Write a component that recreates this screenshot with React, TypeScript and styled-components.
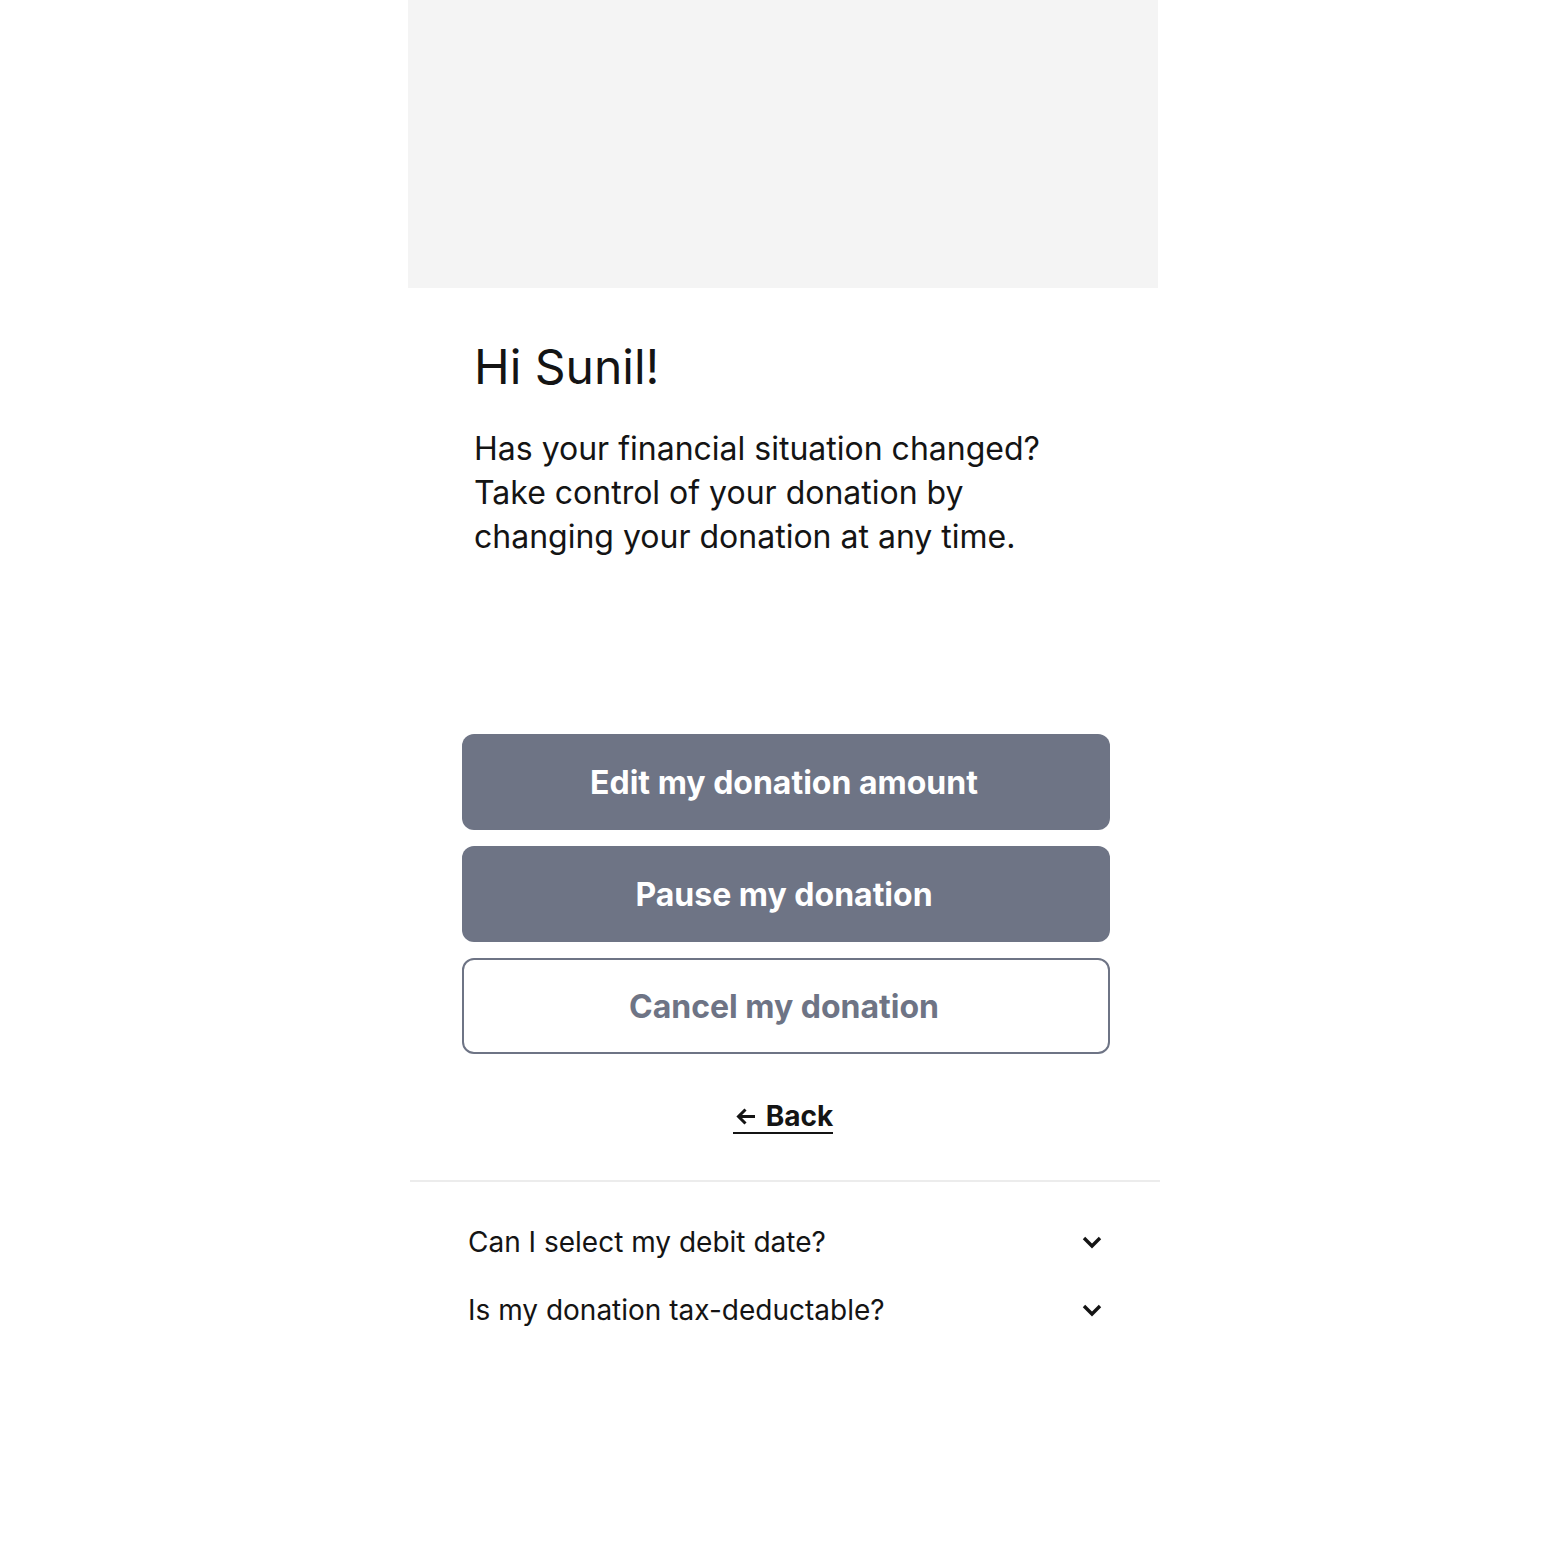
import React from 'react';
import styled, { createGlobalStyle } from 'styled-components';

const GlobalStyle = createGlobalStyle`
  html, body {
    margin: 0;
    padding: 0;
    background: #ffffff;
  }
  body {
    font-family: Inter, "Noto Sans", "Liberation Sans", sans-serif;
    color: #141414;
  }
`;

const Page = styled.div`
  width: 750px;
  margin: 0 auto 0 408px;
  display: flex;
  flex-direction: column;
`;

const Hero = styled.div`
  height: 288px;
  background: #f4f4f4;
`;

const Intro = styled.section`
  padding: 51px 66px 0;
`;

const Heading = styled.h1`
  margin: 0;
  font-size: 48px;
  line-height: 56px;
  font-weight: 400;
  color: #141414;
`;

const Lead = styled.p`
  margin: 32px 0 0;
  font-size: 32px;
  line-height: 44px;
  font-weight: 400;
  color: #141414;
`;

const Actions = styled.div`
  margin-top: 175px;
  padding: 0 48px 0 54px;
  display: flex;
  flex-direction: column;
  gap: 16px;
`;

const ActionButton = styled.button<{ $outline?: boolean }>`
  height: 96px;
  width: 100%;
  padding: 0 4px 0 0;
  border-radius: 12px;
  font-family: Inter, "Noto Sans", "Liberation Sans", sans-serif;
  font-size: 32px;
  font-weight: 700;
  cursor: pointer;
  ${({ $outline }) =>
    $outline
      ? `
    background: #ffffff;
    color: #6e7485;
    border: 2px solid #6e7485;
  `
      : `
    background: #6e7485;
    color: #ffffff;
    border: none;
  `}
`;

const BackRow = styled.div`
  margin-top: 46px;
  display: flex;
  justify-content: center;
`;

const BackLink = styled.a`
  display: inline-flex;
  align-items: center;
  gap: 10px;
  padding-left: 2px;
  font-size: 28px;
  line-height: 32px;
  font-weight: 700;
  color: #141414;
  text-decoration: none;
  border-bottom: 2px solid #141414;
  cursor: pointer;
`;

const Divider = styled.hr`
  margin: 46px 0 0 2px;
  border: none;
  border-top: 2px solid #ececec;
  width: 750px;
`;

const Faq = styled.ul`
  list-style: none;
  margin: 26px 0 0;
  padding: 0 56px 0 60px;
`;

const FaqRow = styled.li`
  height: 68px;
  display: flex;
  align-items: center;
  justify-content: space-between;
  font-size: 28px;
  color: #141414;
  cursor: pointer;
`;

const ArrowLeft = () => (
  <svg width="21" height="19" viewBox="0 0 21 19" fill="none">
    <path d="M20 9.5H3.5M10.5 2.5l-7 7 7 7" stroke="#141414" strokeWidth="3" />
  </svg>
);

const Chevron = () => (
  <svg width="20" height="13" viewBox="0 0 20 13" fill="none">
    <path d="M2 2l8 8 8-8" stroke="#141414" strokeWidth="3.4" />
  </svg>
);

const faqs = ['Can I select my debit date?', 'Is my donation tax-deductable?'];

export default function App() {
  return (
    <>
      <GlobalStyle />
      <Page>
        <Hero />
        <Intro>
          <Heading>Hi Sunil!</Heading>
          <Lead>
            Has your financial situation changed?
            <br />
            Take control of your donation by
            <br />
            changing your donation at any time.
          </Lead>
        </Intro>
        <Actions>
          <ActionButton>Edit my donation amount</ActionButton>
          <ActionButton>Pause my donation</ActionButton>
          <ActionButton $outline>Cancel my donation</ActionButton>
        </Actions>
        <BackRow>
          <BackLink>
            <ArrowLeft />
            Back
          </BackLink>
        </BackRow>
        <Divider />
        <Faq>
          {faqs.map((q) => (
            <FaqRow key={q}>
              <span>{q}</span>
              <Chevron />
            </FaqRow>
          ))}
        </Faq>
      </Page>
    </>
  );
}
